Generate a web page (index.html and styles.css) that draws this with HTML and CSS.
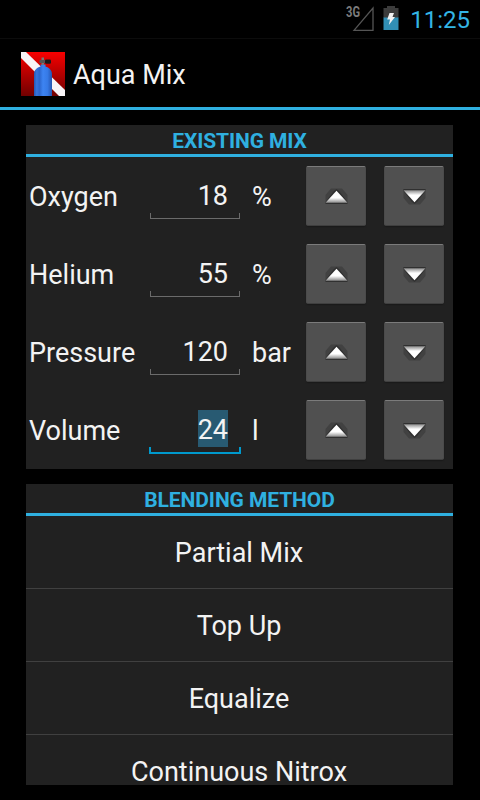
FILE: index.html
```
<!DOCTYPE html>
<html lang="en">
<head>
    <meta charset="utf-8">
    <title>Aqua Mix</title>
    <link rel="stylesheet" href="styles.css">
</head>
<body>
    <svg class="defs" width="0" height="0">
        <defs>
            <linearGradient id="upFill" x1="0" y1="0" x2="0" y2="1">
                <stop offset="0.6" stop-color="#ffffff"/>
                <stop offset="1" stop-color="#8c8c8c"/>
            </linearGradient>
            <linearGradient id="downFill" x1="0" y1="0" x2="0" y2="1">
                <stop offset="0" stop-color="#8c8c8c"/>
                <stop offset="0.4" stop-color="#ffffff"/>
            </linearGradient>
            <symbol id="up" viewBox="0 0 24 18">
                <path d="M1.5 16V8L7 1.5H18L23.5 8V16Z" fill="#414141"/>
                <path d="M1.5 15L9.5 4.5L12.5 2L15.5 4.5L23.5 15V17H1.5Z" fill="#303030"/>
                <path d="M1.5 15.7L12.5 3.7L23.5 15.7Z" fill="url(#upFill)"/>
            </symbol>
            <symbol id="down" viewBox="0 0 24 18">
                <path d="M1.5 2V11L7 17.5H18L23.5 11V2Z" fill="#414141"/>
                <path d="M1.5 4V2H23.5V4L15.5 14.5L12.5 17L9.5 14.5Z" fill="#303030"/>
                <path d="M1.5 3.3L12.5 15.3L23.5 3.3Z" fill="url(#downFill)"/>
            </symbol>
        </defs>
    </svg>

    <div class="status-bar">
        <svg class="signal" width="30" height="28" viewBox="0 0 30 28">
            <text x="1" y="12" class="signal-text" textLength="14" lengthAdjust="spacingAndGlyphs">3G</text>
            <path d="M9 25.3L28 3V25.3Z" fill="none" stroke="#555" stroke-width="1.3"/>
        </svg>
        <svg class="battery" width="16" height="24" viewBox="0 0 16 24">
            <path d="M0.5 2H4V0H12V2H15.5V12H0.5Z" fill="#3c3c3c"/>
            <path d="M0.5 11.5H15.5V24H0.5Z" fill="#318fb5"/>
            <path d="M6.5 7H11L9.5 11H12L5.8 19L7 13.5H4.2Z" fill="#f2f2f2"/>
        </svg>
        <span class="clock">11:25</span>
    </div>

    <div class="action-bar">
        <svg class="logo" width="44" height="44" viewBox="0 0 44 44">
            <defs>
                <linearGradient id="flag" x1="0" y1="0" x2="0" y2="1">
                    <stop offset="0" stop-color="#f80000"/>
                    <stop offset="1" stop-color="#700000"/>
                </linearGradient>
                <linearGradient id="tank" x1="0" y1="0" x2="1" y2="0">
                    <stop offset="0" stop-color="#2458b4"/>
                    <stop offset="0.15" stop-color="#3674dc"/>
                    <stop offset="0.3" stop-color="#2b66cc"/>
                    <stop offset="0.5" stop-color="#3d84f2"/>
                    <stop offset="0.75" stop-color="#367ae6"/>
                    <stop offset="1" stop-color="#2455b0"/>
                </linearGradient>
            </defs>
            <rect width="44" height="44" fill="url(#flag)"/>
            <path d="M0 0H5L44 38V44H38L0 6Z" fill="#f8f4f8"/>
            <path d="M13 44V22C13 18 16 15.5 19.5 14.5V12.5H24.5V14.5C28 15.5 31 18 31 22V44Z" fill="url(#tank)"/>
            <path d="M20.5 13V5.5H23V13Z" fill="#777"/>
            <path d="M18.5 8H25V11H18.5Z" fill="#555"/>
            <rect x="24" y="7.5" width="6" height="4.2" rx="1.2" fill="#1c1818"/>
        </svg>
        <span class="app-title">Aqua Mix</span>
    </div>

    <div class="content">
        <div class="panel">
            <h2>EXISTING MIX</h2>
            <div class="row">
                <span class="label">Oxygen</span>
                <div class="field"><span class="value">18</span></div>
                <span class="unit">%</span>
                <button><svg width="24" height="18"><use href="#up"/></svg></button>
                <button><svg width="24" height="18"><use href="#down"/></svg></button>
            </div>
            <div class="row">
                <span class="label">Helium</span>
                <div class="field"><span class="value">55</span></div>
                <span class="unit">%</span>
                <button><svg width="24" height="18"><use href="#up"/></svg></button>
                <button><svg width="24" height="18"><use href="#down"/></svg></button>
            </div>
            <div class="row">
                <span class="label">Pressure</span>
                <div class="field"><span class="value">120</span></div>
                <span class="unit">bar</span>
                <button><svg width="24" height="18"><use href="#up"/></svg></button>
                <button><svg width="24" height="18"><use href="#down"/></svg></button>
            </div>
            <div class="row">
                <span class="label">Volume</span>
                <div class="field focused"><span class="value">24</span></div>
                <span class="unit">l</span>
                <button><svg width="24" height="18"><use href="#up"/></svg></button>
                <button><svg width="24" height="18"><use href="#down"/></svg></button>
            </div>
        </div>

        <div class="panel methods">
            <h2>BLENDING METHOD</h2>
            <div class="method">Partial Mix</div>
            <div class="method">Top Up</div>
            <div class="method">Equalize</div>
            <div class="method">Continuous Nitrox</div>
        </div>
    </div>
</body>
</html>
```
FILE: styles.css
```
* {
  box-sizing: border-box;
}

body {
  margin: 0;
  width: 480px;
  height: 800px;
  overflow: hidden;
  background-color: #000;
  color: #f3f3f3;
  font-family: Roboto, sans-serif;
  font-size: 27px;
}

svg {
  display: block;
}

.defs {
  position: absolute;
}

.status-bar {
  display: flex;
  justify-content: flex-end;
  height: 38px;
  padding-right: 10px;
}

.signal {
  margin-top: 5px;
}

.signal-text {
  font-size: 14px;
  font-weight: bold;
  fill: #7c7c7c;
}

.battery {
  margin: 6px 11px 0 8px;
}

.clock {
  font-size: 24px;
  line-height: 40px;
  color: #33b5e5;
}

.action-bar {
  display: flex;
  align-items: center;
  height: 72px;
  padding: 2px 0 0 21px;
  border-top: 1px solid #0c0c0c;
  border-bottom: 3px solid #2fb0e0;
}

.app-title {
  margin-left: 8px;
  padding-top: 2px;
}

.content {
  padding: 15px 27px 0 26px;
}

.panel {
  background-color: #212121;
  margin-bottom: 15px;
}

h2 {
  margin: 0;
  height: 32px;
  border-bottom: 3px solid #2fb0e0;
  color: #2fb0e0;
  font-size: 21px;
  font-weight: bold;
  letter-spacing: -0.1px;
  line-height: 32px;
  text-align: center;
}

.row {
  display: flex;
  height: 78px;
  padding: 0 9px 0 3px;
}

.label {
  width: 120px;
  line-height: 81px;
}

.field {
  width: 92px;
  height: 63px;
  padding: 19px 13px 0 0;
  text-align: right;
  /* bottom line with a short tick at both ends */
  background: linear-gradient(#6b6b6b, #6b6b6b) 1px 61px / 90px 1px no-repeat,
    linear-gradient(#6b6b6b, #6b6b6b) 1px 56px / 1px 5px no-repeat,
    linear-gradient(#6b6b6b, #6b6b6b) 90px 56px / 1px 5px no-repeat;
}

.focused {
  background: linear-gradient(#0099cc, #0099cc) 0 61px / 92px 2px no-repeat,
    linear-gradient(#0099cc, #0099cc) 0 56px / 2px 5px no-repeat,
    linear-gradient(#0099cc, #0099cc) 90px 56px / 2px 5px no-repeat;
}

.value {
  display: inline-block;
  height: 37px;
  line-height: 41px;
}

.focused .value {
  background-color: #285a72;
}

.unit {
  width: 65px;
  padding-left: 11px;
  line-height: 81px;
}

button {
  display: flex;
  align-items: center;
  justify-content: center;
  width: 60px;
  height: 60px;
  margin: 9px 18px 0 0;
  padding: 0;
  flex-shrink: 0;
  border: 1px solid #4b4b4b;
  border-top-color: #7b7b7b;
  border-bottom-color: #3f3f3f;
  border-radius: 2px;
  background-color: #505050;
  box-shadow: 0 1px 1px #1a1a1a;
}

button:last-child {
  margin-right: 0;
}

.methods {
  height: 301px;
  overflow: hidden;
}

.method {
  height: 73px;
  padding-right: 1px;
  border-bottom: 1px solid #404040;
  line-height: 75px;
  text-align: center;
}
```
